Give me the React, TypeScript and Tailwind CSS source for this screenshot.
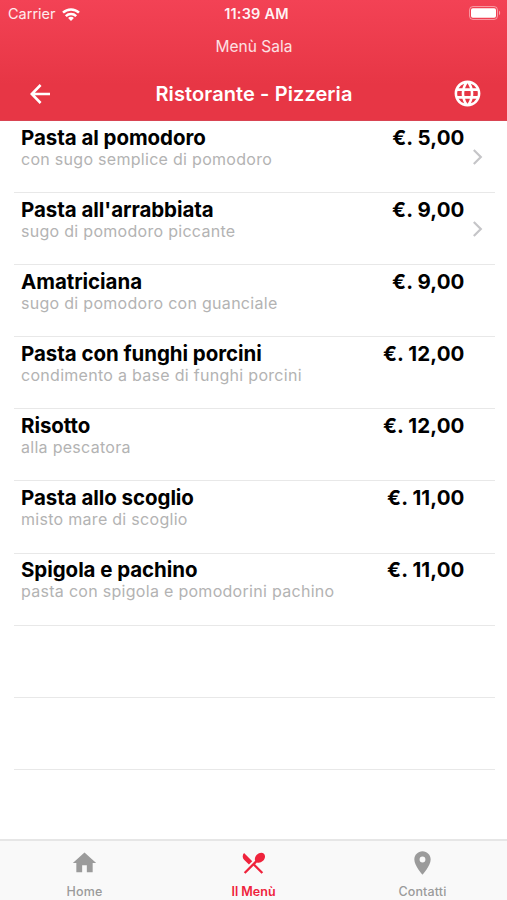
import type { ReactNode } from 'react';
import { MdHome, MdLanguage, MdLocationOn, MdRestaurantMenu } from 'react-icons/md';

interface Dish {
  name: string;
  description: string;
  price: string;
  hasDetail?: boolean;
}

const dishes: Dish[] = [
  { name: 'Pasta al pomodoro', description: 'con sugo semplice di pomodoro', price: '5,00', hasDetail: true },
  { name: "Pasta all'arrabbiata", description: 'sugo di pomodoro piccante', price: '9,00', hasDetail: true },
  { name: 'Amatriciana', description: 'sugo di pomodoro con guanciale', price: '9,00' },
  { name: 'Pasta con funghi porcini', description: 'condimento a base di funghi porcini', price: '12,00' },
  { name: 'Risotto', description: 'alla pescatora', price: '12,00' },
  { name: 'Pasta allo scoglio', description: 'misto mare di scoglio', price: '11,00' },
  { name: 'Spigola e pachino', description: 'pasta con spigola e pomodorini pachino', price: '11,00' },
];

const WifiIcon = () => (
  <svg className="w-[18px] h-[13px]" viewBox="0 0 18 13" fill="none" stroke="#fff" strokeWidth="2.5">
    <path d="M1 4.7a11.6 11.6 0 0 1 16 0" />
    <path d="M3.8 8.1a7.5 7.5 0 0 1 10.4 0" />
    <path d="M6.1 10.1a4 4 0 0 1 5.8 0L9 13z" fill="#fff" stroke="none" />
  </svg>
);

const BatteryIcon = () => (
  <svg className="w-8 h-[14px]" viewBox="0 0 32 14">
    <rect x=".5" y=".5" width="28" height="13" rx="3.5" fill="none" stroke="#fff" strokeOpacity=".45" />
    <rect x="2" y="2.2" width="25" height="9.6" rx="1.8" fill="#fff" />
    <path d="M30 4.8c1.5.5 1.5 3.9 0 4.4z" fill="#fff" fillOpacity=".5" />
  </svg>
);

const BackIcon = () => (
  <svg className="w-5 h-5" viewBox="0 0 20 20" fill="none" stroke="currentColor" strokeWidth="2.6">
    <path d="M10.6 1 1.8 10l8.8 9M2 10h18" />
  </svg>
);

/* ── Status bar + navigation ── */
const Header = () => (
  <header className="h-[121px] shrink-0 bg-linear-to-b from-[#f34255] to-[#e73645] to-70% border-b border-[#d94452] text-white">
    <div className="grid grid-cols-3 items-center h-7 pl-2 pr-[3px]">
      <div className="flex items-center gap-[6px] text-[14.5px] text-white/90">
        <span>Carrier</span>
        <WifiIcon />
      </div>
      <span className="pl-px text-center text-[14.5px] tracking-[0.2px] font-semibold text-white/95">11:39 AM</span>
      <div className="flex justify-end -mt-[2px] pr-[3px]">
        <BatteryIcon />
      </div>
    </div>

    <p className="h-[38px] pt-2 pl-px text-center text-[15.5px] leading-[22px] text-white/85">Menù Sala</p>

    <div className="flex items-center justify-between h-[55px] pl-[30px] pr-6">
      <button className="w-[26px]"><BackIcon /></button>
      <h1 className="text-[20px] tracking-[0.1px] font-semibold">Ristorante - Pizzeria</h1>
      <button><MdLanguage className="w-[31px] h-[31px]" /></button>
    </div>
  </header>
);

const DishRow = ({ dish }: { dish?: Dish }) => (
  <li className="flex justify-between h-[72.1px] shrink-0 ml-[14px] mr-3 pl-[7px] pr-3 border-b border-[#e8e8e8]">
    {dish && (
      <>
        <div className="pt-[4.8px]">
          <h2 className="text-[20.5px] leading-6 tracking-[-0.06px] font-bold text-black">{dish.name}</h2>
          <p className="-mt-px text-[16px] leading-5 tracking-[0.29px] text-[#b3b3b3]">{dish.description}</p>
        </div>
        <div className="flex">
          <span className="pt-[4.8px] text-[20.5px] leading-6 tracking-[0.1px] font-bold text-black">€. {dish.price}</span>
          <div className="w-[18.5px] pt-7 flex justify-end">
            {dish.hasDetail && (
              <svg className="w-[10px] h-4" viewBox="0 0 10 16" fill="none" stroke="#c5c5c8" strokeWidth="2.2">
                <path d="m.8 1 7 7-7 7" />
              </svg>
            )}
          </div>
        </div>
      </>
    )}
  </li>
);

const Tab = ({ icon, label, active }: { icon: ReactNode; label: string; active?: boolean }) => (
  <button className={`w-[169px] flex flex-col items-center pt-2 ${active ? 'text-[#ef233c]' : 'text-[#9b9b9b]'}`}>
    {icon}
    <span className={`mt-[7px] text-[12.5px] leading-4 ${active ? 'font-semibold' : 'font-medium tracking-[0.15px]'}`}>
      {label}
    </span>
  </button>
);

export default function App() {
  return (
    <div className="flex flex-col w-[507px] h-[900px] overflow-hidden bg-white font-['Inter',sans-serif]">
      <Header />

      {/* ── Dishes, then blank rows down to the tab bar ── */}
      <ul className="flex flex-col flex-1 min-h-0">
        {dishes.map(dish => (
          <DishRow key={dish.name} dish={dish} />
        ))}
        <DishRow />
        <DishRow />
      </ul>

      {/* ── Tab bar ── */}
      <nav className="flex h-[61px] shrink-0 border-t-2 border-[#e6e6e6] bg-[#f9f9f9]">
        <Tab icon={<MdHome className="w-[29px] h-[29px]" />} label="Home" />
        <Tab icon={<MdRestaurantMenu className="w-[29px] h-[29px]" />} label="Il Menù" active />
        <Tab icon={<MdLocationOn className="w-[29px] h-[29px]" />} label="Contatti" />
      </nav>
    </div>
  );
}
